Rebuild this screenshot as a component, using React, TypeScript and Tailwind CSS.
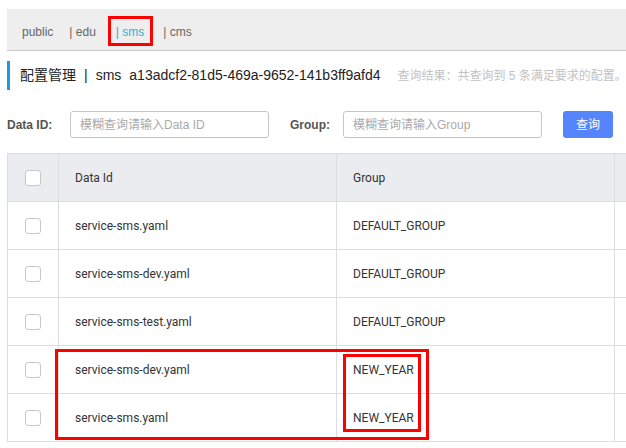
import React from 'react';

const rows = [
  { id: 'service-sms.yaml', group: 'DEFAULT_GROUP' },
  { id: 'service-sms-dev.yaml', group: 'DEFAULT_GROUP' },
  { id: 'service-sms-test.yaml', group: 'DEFAULT_GROUP' },
  { id: 'service-sms-dev.yaml', group: 'NEW_YEAR' },
  { id: 'service-sms.yaml', group: 'NEW_YEAR' },
];

const font = { fontFamily: '"Liberation Sans", "Noto Sans CJK SC", sans-serif' };
const tableFont = { fontFamily: 'Roboto, "Noto Sans CJK SC", sans-serif' };

function Checkbox() {
  return <div className="w-[16px] h-[16px] rounded-[3px] border border-[#c8c8cc] bg-white" />;
}

export default function App() {
  return (
    <div className="relative w-[626px] h-[448px] bg-white overflow-hidden text-[#333] whitespace-nowrap" style={font}>
      {/* namespace tabs */}
      <div className="ml-[7px] mt-[9px] h-[42px] bg-[#eeeeee] border-b border-[#cccccc] flex items-center pt-[4px] pl-[15px] text-[12px] text-[#666]">
        <span>public</span>
        <span className="ml-[16px]">| edu</span>
        <span className="ml-[20px] text-[#2bb0d8]">| sms</span>
        <span className="ml-[19px]">| cms</span>
      </div>

      {/* title */}
      <div className="ml-[7px] mt-[10px] h-[29px] border-l-[3px] border-[#1a9fd3] flex items-center pl-[10px]">
        <span className="text-[14px] text-[#222]">配置管理</span>
        <span className="text-[14px] text-[#222] ml-[8px]">|</span>
        <span className="text-[14px] text-[#222] ml-[8px]">sms</span>
        <span className="text-[14px] text-[#222] ml-[8px]">a13adcf2-81d5-469a-9652-141b3ff9afd4</span>
        <span className="text-[12px] text-[#c2c2c2] ml-[17px]">查询结果：共查询到 5 条满足要求的配置。</span>
      </div>

      {/* search */}
      <div className="ml-[7px] mt-[21px] h-[27px] flex items-center text-[12px]">
        <span className="font-bold text-[#555] w-[63px]">Data ID:</span>
        <div className="w-[199px] h-[27px] border border-[#c4c6cc] rounded-[3px] flex items-center pl-[9px] text-[#aaa]">
          模糊查询请输入Data ID
        </div>
        <span className="font-bold text-[#555] ml-[21px] w-[53px]">Group:</span>
        <div className="w-[199px] h-[27px] border border-[#c4c6cc] rounded-[3px] flex items-center pl-[9px] text-[#aaa]">
          模糊查询请输入Group
        </div>
        <div className="ml-[21px] w-[50px] h-[27px] rounded-[3px] bg-[#5584ff] text-white flex items-center justify-center">
          查询
        </div>
      </div>

      {/* table */}
      <div className="ml-[7px] mt-[15px] border-t border-l border-[#dcdde2] text-[12px]" style={tableFont}>
        <div className="flex h-[48px] bg-[#ebecf0] border-b border-[#dcdde2]">
          <div className="w-[51px] border-r border-[#dcdde2] flex items-center justify-center">
            <Checkbox />
          </div>
          <div className="w-[278px] border-r border-[#dcdde2] flex items-center pl-[16px]">Data Id</div>
          <div className="w-[278px] border-r border-[#dcdde2] flex items-center pl-[16px]">Group</div>
          <div className="flex-1" />
        </div>
        {rows.map((r, i) => (
          <div key={i} className="flex h-[48px] border-b border-[#dcdde2]">
            <div className="w-[51px] border-r border-[#dcdde2] flex items-center justify-center">
              <Checkbox />
            </div>
            <div className="w-[278px] border-r border-[#dcdde2] flex items-center pl-[16px]">{r.id}</div>
            <div className="w-[278px] border-r border-[#dcdde2] flex items-center pl-[16px]">{r.group}</div>
            <div className="flex-1" />
          </div>
        ))}
      </div>

      {/* red annotation boxes */}
      <div className="absolute left-[108px] top-[16px] w-[45px] h-[30px] border-[3px] border-[#ff0000]" />
      <div className="absolute left-[55px] top-[349px] w-[374px] h-[91px] border-[3px] border-[#ff0000]" />
      <div className="absolute left-[343px] top-[354px] w-[78px] h-[78px] border-[3px] border-[#ff0000]" />
    </div>
  );
}
